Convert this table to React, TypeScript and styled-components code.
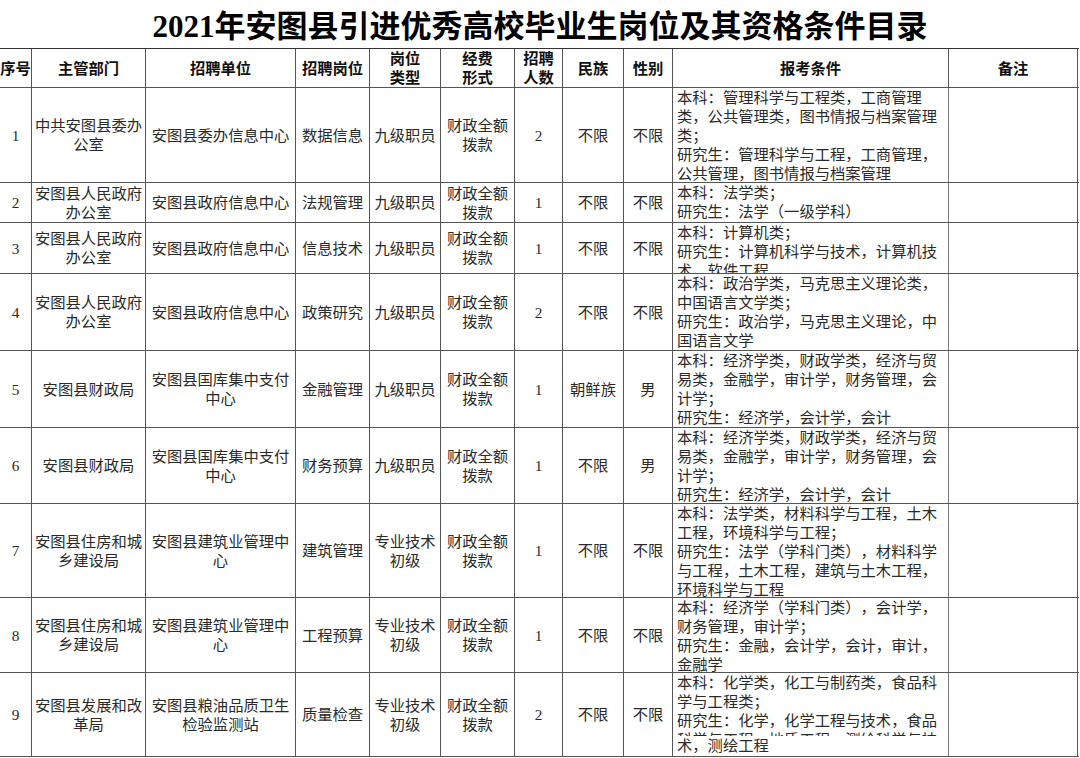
import React from "react";
import styled, {createGlobalStyle} from "styled-components";

const COLS = "32px 114px 150px 74px 71px 74px 48px 61px 49px 276px 129px";
const FONT = `"Liberation Serif", "Noto Sans CJK SC", serif`;

const GlobalStyle = createGlobalStyle`
  * {
    box-sizing: border-box;
  }
  body {
    margin: 0;
    background: #ffffff;
    overflow: hidden;
    font-family: ${FONT};
    text-spacing-trim: space-all;
  }
`

const Page = styled.div`
  width: 1080px;
  height: 758px;
  background: #ffffff;
  overflow: hidden;
`

const Title = styled.h1`
  margin: 0;
  height: 48px;
  display: flex;
  justify-content: center;
  align-items: center;
  padding-bottom: 2px;
  font-family: ${FONT};
  font-size: 31px;
  font-weight: 700;
  color: #000000;
  letter-spacing: 0;
`

const Table = styled.div`
  width: 1079px;
  border-top: 1px solid #333;
`

const Row = styled.div<{ $h: number }>`
  display: grid;
  grid-template-columns: ${COLS};
  height: ${p => p.$h}px;
  border-bottom: 1px solid #555;
`

const Cell = styled.div<{ $head?: boolean; $tight?: boolean }>`
  display: flex;
  align-items: center;
  justify-content: center;
  text-align: center;
  padding: ${p => (p.$tight ? "0" : "0 2px")};
  border-right: 1px solid #555;
  overflow: hidden;
  font-size: 15.3px;
  line-height: 19px;
  font-weight: ${p => (p.$head ? 700 : 400)};
  color: ${p => (p.$head ? "#111" : "#2a2a2a")};
  white-space: ${p => (p.$tight ? "nowrap" : "pre-line")};
  text-spacing-trim: space-all;
`

const CondCell = styled.div`
  padding: 0 2px 0 4px;
  border-right: 1px solid #7a7a7a;
  overflow: hidden;
  font-size: 15.3px;
  line-height: 19px;
  color: #2a2a2a;
  text-align: left;
  text-spacing-trim: space-all;
`

const CondLine = styled.div`
  white-space: normal;
`

const ClippedLine = styled.div`
  height: 6px;
  overflow: hidden;
  white-space: nowrap;
`

type Job = {
    no: number;
    dept: string;
    unit: string;
    post: string;
    kind: string;
    fund: string;
    count: number;
    nation: string;
    sex: string;
    cond: string[];
    clipped?: string;
    tail?: string;
    h: number;
};

const FUND = "财政全额拨款";

const jobs: Job[] = [
    {
        no: 1, dept: "中共安图县委办公室", unit: "安图县委办信息中心", post: "数据信息", kind: "九级职员",
        fund: FUND, count: 2, nation: "不限", sex: "不限", h: 95,
        cond: ["本科：管理科学与工程类，工商管理类，公共管理类，图书情报与档案管理类；", "研究生：管理科学与工程，工商管理，公共管理，图书情报与档案管理"],
    },
    {
        no: 2, dept: "安图县人民政府办公室", unit: "安图县政府信息中心", post: "法规管理", kind: "九级职员",
        fund: FUND, count: 1, nation: "不限", sex: "不限", h: 40,
        cond: ["本科：法学类；", "研究生：法学（一级学科）"],
    },
    {
        no: 3, dept: "安图县人民政府办公室", unit: "安图县政府信息中心", post: "信息技术", kind: "九级职员",
        fund: FUND, count: 1, nation: "不限", sex: "不限", h: 51,
        cond: ["本科：计算机类；", "研究生：计算机科学与技术，计算机技术，软件工程"],
    },
    {
        no: 4, dept: "安图县人民政府办公室", unit: "安图县政府信息中心", post: "政策研究", kind: "九级职员",
        fund: FUND, count: 2, nation: "不限", sex: "不限", h: 77,
        cond: ["本科：政治学类，马克思主义理论类，中国语言文学类；", "研究生：政治学，马克思主义理论，中国语言文学"],
    },
    {
        no: 5, dept: "安图县财政局", unit: "安图县国库集中支付中心", post: "金融管理", kind: "九级职员",
        fund: FUND, count: 1, nation: "朝鲜族", sex: "男", h: 77,
        cond: ["本科：经济学类，财政学类，经济与贸易类，金融学，审计学，财务管理，会计学；", "研究生：经济学，会计学，会计"],
    },
    {
        no: 6, dept: "安图县财政局", unit: "安图县国库集中支付中心", post: "财务预算", kind: "九级职员",
        fund: FUND, count: 1, nation: "不限", sex: "男", h: 76,
        cond: ["本科：经济学类，财政学类，经济与贸易类，金融学，审计学，财务管理，会计学；", "研究生：经济学，会计学，会计"],
    },
    {
        no: 7, dept: "安图县住房和城乡建设局", unit: "安图县建筑业管理中心", post: "建筑管理", kind: "专业技术初级",
        fund: FUND, count: 1, nation: "不限", sex: "不限", h: 94,
        cond: ["本科：法学类，材料科学与工程，土木工程，环境科学与工程；", "研究生：法学（学科门类），材料科学与工程，土木工程，建筑与土木工程，环境科学与工程"],
    },
    {
        no: 8, dept: "安图县住房和城乡建设局", unit: "安图县建筑业管理中心", post: "工程预算", kind: "专业技术初级",
        fund: FUND, count: 1, nation: "不限", sex: "不限", h: 75,
        cond: ["本科：经济学（学科门类），会计学，财务管理，审计学；", "研究生：金融，会计学，会计，审计，金融学"],
    },
    {
        no: 9, dept: "安图县发展和改革局", unit: "安图县粮油品质卫生检验监测站", post: "质量检查", kind: "专业技术初级",
        fund: FUND, count: 2, nation: "不限", sex: "不限", h: 84,
        cond: ["本科：化学类，化工与制药类，食品科学与工程类；", "研究生：化学，化学工程与技术，食品"],
        clipped: "科学与工程，地质工程，测绘科学与技",
        tail: "术，测绘工程",
    },
];

const headers = ["序号", "主管部门", "招聘单位", "招聘岗位", "岗位\n类型", "经费\n形式", "招聘\n人数", "民族", "性别", "报考条件", "备注"];

const App = () => {
    return (
        <Page>
            <GlobalStyle/>
            <Title>2021年安图县引进优秀高校毕业生岗位及其资格条件目录</Title>
            <Table>
                <Row $h={39}>
                    {headers.map((h, i) => <Cell key={h} $head $tight={i === 0}>{h}</Cell>)}
                </Row>
                {jobs.map(job => (
                    <Row key={job.no} $h={job.h}>
                        <Cell $tight>{job.no}</Cell>
                        <Cell>{job.dept}</Cell>
                        <Cell>{job.unit}</Cell>
                        <Cell>{job.post}</Cell>
                        <Cell>{job.kind}</Cell>
                        <Cell>{job.fund}</Cell>
                        <Cell>{job.count}</Cell>
                        <Cell>{job.nation}</Cell>
                        <Cell>{job.sex}</Cell>
                        <CondCell>
                            {job.cond.map(c => <CondLine key={c}>{c}</CondLine>)}
                            {job.clipped && <ClippedLine>{job.clipped}</ClippedLine>}
                            {job.tail && <CondLine>{job.tail}</CondLine>}
                        </CondCell>
                        <Cell/>
                    </Row>
                ))}
            </Table>
        </Page>
    );
}

export default App;
